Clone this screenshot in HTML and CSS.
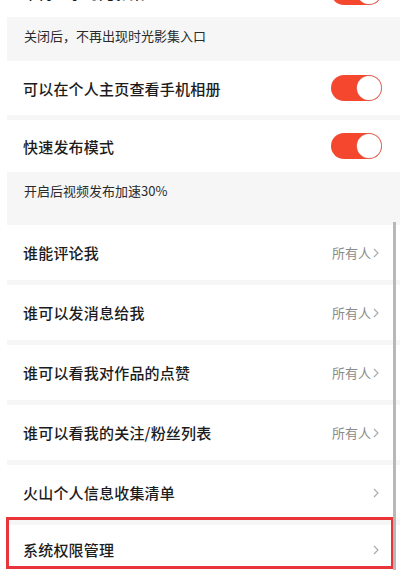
FILE: index.html
```html
<!DOCTYPE html>
<html lang="zh-CN">
<head>
    <meta charset="UTF-8">
    <meta name="viewport" content="width=device-width, initial-scale=1.0">
    <title>隐私设置</title>
    <link rel="stylesheet" href="styles.css">
</head>
<body>
    <div class="page">
        <div class="row row-cut">
            <span class="title">不再显示时光影集</span>
            <span class="switch on"></span>
        </div>
        <div class="hint hint-short">关闭后，不再出现时光影集入口</div>

        <div class="row row-album">
            <span class="title">可以在个人主页查看手机相册</span>
            <span class="switch on"></span>
        </div>
        <div class="sep"></div>
        <div class="row row-fast">
            <span class="title">快速发布模式</span>
            <span class="switch on"></span>
        </div>
        <div class="hint hint-tall">开启后视频发布加速30%</div>

        <div class="row">
            <span class="title">谁能评论我</span>
            <span class="value">所有人<svg class="chev" viewBox="0 0 6 10"><polyline points="1,1 5,5 1,9"/></svg></span>
        </div>
        <div class="sep"></div>
        <div class="row">
            <span class="title">谁可以发消息给我</span>
            <span class="value">所有人<svg class="chev" viewBox="0 0 6 10"><polyline points="1,1 5,5 1,9"/></svg></span>
        </div>
        <div class="sep"></div>
        <div class="row">
            <span class="title">谁可以看我对作品的点赞</span>
            <span class="value">所有人<svg class="chev" viewBox="0 0 6 10"><polyline points="1,1 5,5 1,9"/></svg></span>
        </div>
        <div class="sep"></div>
        <div class="row">
            <span class="title">谁可以看我的关注/粉丝列表</span>
            <span class="value">所有人<svg class="chev" viewBox="0 0 6 10"><polyline points="1,1 5,5 1,9"/></svg></span>
        </div>
        <div class="sep"></div>
        <div class="row">
            <span class="title">火山个人信息收集清单</span>
            <span class="value"><svg class="chev" viewBox="0 0 6 10"><polyline points="1,1 5,5 1,9"/></svg></span>
        </div>
        <div class="sep"></div>
        <div class="row marked">
            <span class="title">系统权限管理</span>
            <span class="value"><svg class="chev" viewBox="0 0 6 10"><polyline points="1,1 5,5 1,9"/></svg></span>
        </div>

        <div class="scrollbar"></div>
    </div>
</body>
</html>
```

FILE: styles.css
```css
html, body {
    margin: 0;
    padding: 0;
    background: #fff;
    overflow: hidden;
}

body {
    font-family: "Noto Sans CJK SC", "Noto Sans", sans-serif;
    color: #1c1c1c;
}

.page {
    position: relative;
    height: 570px;
    padding-left: 7px;
    overflow: hidden;
    display: flex;
    flex-direction: column;
}

.row {
    flex: none;
    height: 55px;
    display: flex;
    align-items: center;
    justify-content: space-between;
    padding: 0 18px 0 16px;
    background: #fff;
    position: relative;
    box-sizing: border-box;
}

.row-cut {
    height: 50px;
    margin-top: -33px;
}

.row-album {
    height: 54px;
}

.row-fast {
    height: 52px;
}

.title {
    font-size: 15px;
    font-weight: 500;
    letter-spacing: 0.2px;
}

.value {
    display: flex;
    align-items: center;
    gap: 2px;
    font-size: 13px;
    color: #8a8a8a;
    margin-right: 3px;
}

.chev {
    width: 6px;
    height: 10px;
    fill: none;
    stroke: #a8a8a8;
    stroke-width: 1.1;
}

.switch {
    width: 51px;
    height: 26px;
    border-radius: 13px;
    background: #f4472e;
    position: relative;
    box-sizing: border-box;
}

.switch.on::after {
    content: "";
    position: absolute;
    top: 1px;
    right: 1px;
    width: 24px;
    height: 24px;
    border-radius: 50%;
    background: #fff;
    box-shadow: 0 0 0 0.5px #c98a80;
}

.hint {
    flex: none;
    background: #f6f6f6;
    font-size: 13px;
    color: #2a2a2a;
    padding: 9px 0 0 17px;
    box-sizing: border-box;
}

.hint-short {
    height: 44px;
}

.hint-tall {
    height: 53px;
}

.sep {
    flex: none;
    height: 5px;
    background: #f6f6f6;
}

.marked {
    padding-bottom: 6px;
}

.marked::after {
    content: "";
    position: absolute;
    top: -8px;
    left: -1px;
    width: 388px;
    height: 52px;
    border: 3px solid #e8353a;
    box-sizing: border-box;
}

.scrollbar {
    position: absolute;
    right: 4px;
    top: 222px;
    bottom: 0;
    width: 3px;
    background: #b8b8b8;
}
```
